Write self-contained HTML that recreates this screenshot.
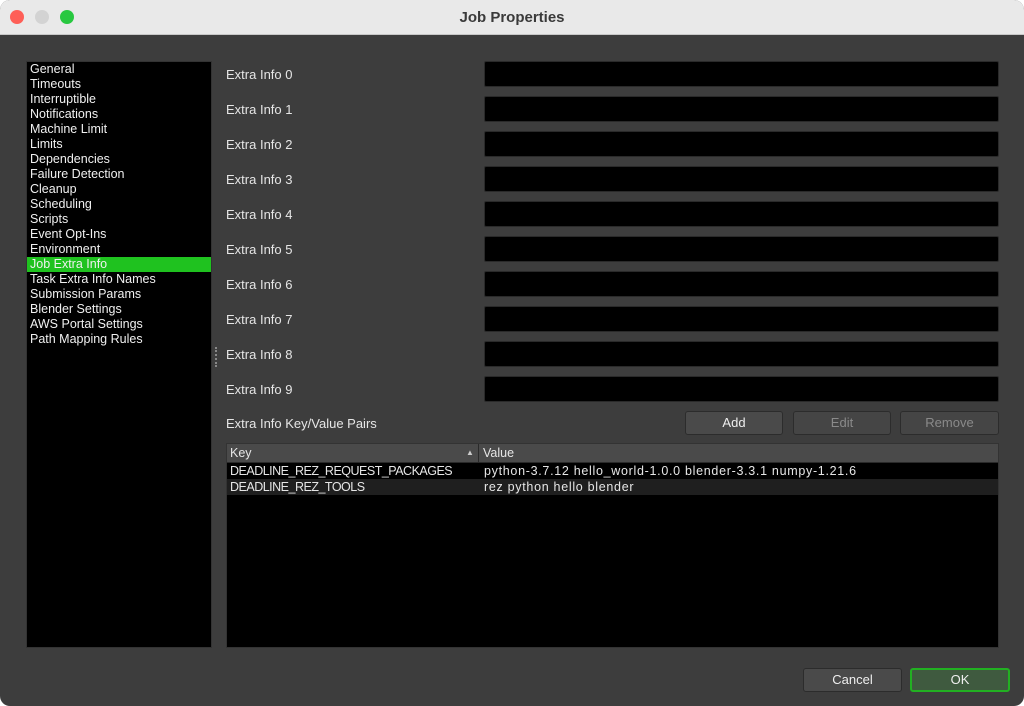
<!DOCTYPE html>
<html><head><style>
*{margin:0;padding:0;box-sizing:border-box}
body{width:1024px;height:706px;background:#fff;font-family:"Liberation Sans",sans-serif;font-size:12.5px;color:#e6e6e6;overflow:hidden;position:relative}
.win{position:absolute;left:0;top:0;width:1024px;height:706px;background:#3d3d3d;border-radius:10px;overflow:hidden}
.tb{position:absolute;left:0;top:0;width:1024px;height:35px;background:#e9e9e9;border-bottom:1px solid #c8c8c8;color:#3a3a3a;font-weight:bold;font-size:15px;text-align:center;line-height:35px}
.dot{position:absolute;top:10px;width:14px;height:14px;border-radius:50%}
.abs{position:absolute}
.list{left:26px;top:61px;width:186px;height:587px;background:#000;border:1px solid #333}
.list div{height:15px;line-height:15px;padding-left:3px;color:#f0f0f0}
.list .sel{background:#1fc21f}
.lbl{position:absolute;left:226px;color:#e6e6e6;font-size:13px}
.fld{position:absolute;left:484px;width:515px;height:26px;background:#000;border:1px solid #2a2a2a;border-radius:2px}
.btn{position:absolute;height:24px;background:#4a4a4a;border:1px solid #2c2c2c;border-radius:3px;text-align:center;line-height:22px;color:#eee;font-size:13px}
.dis{color:#8a8a8a;background:#454545}
.k{position:absolute;left:3px;letter-spacing:-0.5px}
.v{position:absolute;left:257px;letter-spacing:0.7px}
</style></head><body>
<div class="win">
<div class="tb">Job Properties
<div class="dot" style="left:10px;background:#fe5f57"></div>
<div class="dot" style="left:35px;background:#d3d3d3"></div>
<div class="dot" style="left:60px;background:#28c840"></div>
</div>
<div class="abs list">
<div>General</div><div>Timeouts</div><div>Interruptible</div><div>Notifications</div><div>Machine Limit</div><div>Limits</div><div>Dependencies</div><div>Failure Detection</div><div>Cleanup</div><div>Scheduling</div><div>Scripts</div><div>Event Opt-Ins</div><div>Environment</div><div class="sel">Job Extra Info</div><div>Task Extra Info Names</div><div>Submission Params</div><div>Blender Settings</div><div>AWS Portal Settings</div><div>Path Mapping Rules</div>
</div>
<div class="abs" style="left:215px;top:347px;width:2px;height:20px;border-left:2px dotted #888"></div>

<div class="lbl" style="top:67px">Extra Info 0</div><div class="fld" style="top:61px"></div>
<div class="lbl" style="top:102px">Extra Info 1</div><div class="fld" style="top:96px"></div>
<div class="lbl" style="top:137px">Extra Info 2</div><div class="fld" style="top:131px"></div>
<div class="lbl" style="top:172px">Extra Info 3</div><div class="fld" style="top:166px"></div>
<div class="lbl" style="top:207px">Extra Info 4</div><div class="fld" style="top:201px"></div>
<div class="lbl" style="top:242px">Extra Info 5</div><div class="fld" style="top:236px"></div>
<div class="lbl" style="top:277px">Extra Info 6</div><div class="fld" style="top:271px"></div>
<div class="lbl" style="top:312px">Extra Info 7</div><div class="fld" style="top:306px"></div>
<div class="lbl" style="top:347px">Extra Info 8</div><div class="fld" style="top:341px"></div>
<div class="lbl" style="top:382px">Extra Info 9</div><div class="fld" style="top:376px"></div>
<div class="lbl" style="top:416px">Extra Info Key/Value Pairs</div>

<div class="btn" style="left:685px;top:411px;width:98px">Add</div>
<div class="btn dis" style="left:793px;top:411px;width:98px">Edit</div>
<div class="btn dis" style="left:900px;top:411px;width:99px">Remove</div>

<div class="abs" style="left:226px;top:443px;width:773px;height:205px;background:#000;border:1px solid #333">
<div style="height:19px;background:#4a4a4a;border-bottom:1px solid #2a2a2a;position:relative;line-height:19px">
<span style="position:absolute;left:3px">Key</span>
<span style="position:absolute;left:239px;top:-1px;font-size:8px;color:#ccc">▲</span>
<span style="position:absolute;left:251px;top:0;height:19px;border-left:1px solid #2a2a2a"></span>
<span style="position:absolute;left:256px">Value</span></div>
<div style="height:16px;line-height:16px;position:relative"><span class="k">DEADLINE_REZ_REQUEST_PACKAGES</span><span class="v">python-3.7.12 hello_world-1.0.0 blender-3.3.1 numpy-1.21.6</span></div>
<div style="height:16px;line-height:16px;position:relative;background:#1f1f1f"><span class="k">DEADLINE_REZ_TOOLS</span><span class="v">rez python hello blender</span></div>
</div>

<div class="btn" style="left:803px;top:668px;width:99px">Cancel</div>
<div class="btn" style="left:910px;top:668px;width:100px;background:#3f5a3f;border:2px solid #22b022;line-height:20px">OK</div>
</div>
</body></html>
